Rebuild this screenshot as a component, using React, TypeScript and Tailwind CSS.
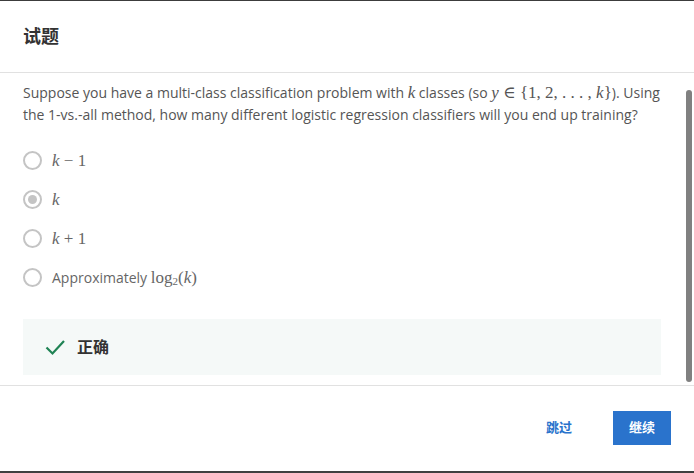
import React from "react";

const sans = "font-['Open_Sans','Noto_Sans_CJK_SC',sans-serif]";
const math = "font-['Liberation_Serif','DejaVu_Serif',serif] text-[17px] leading-none";

const options: React.ReactNode[] = [
  <span className={math}>
    <i>k</i> − 1
  </span>,
  <span className={math}>
    <i>k</i>
  </span>,
  <span className={math}>
    <i>k</i> + 1
  </span>,
  <span>
    Approximately{" "}
    <span className={math}>
      log<sub className="text-[11px]">2</sub>(<i>k</i>)
    </span>
  </span>,
];

const Radio = ({ checked }: { checked: boolean }) => (
  <span className="flex h-[19px] w-[19px] items-center justify-center rounded-full border-2 border-[#c4c4c4]">
    {checked && <span className="h-[9px] w-[9px] rounded-full bg-[#c4c4c4]" />}
  </span>
);

export default function App() {
  return (
    <div className={"flex h-[473px] w-[694px] flex-col bg-white border-t border-[#3c3c3c] border-b-2 border-b-[#404040] " + sans}>
      <div className="flex h-[72px] shrink-0 items-center border-b border-[#e1e1e1] px-[23px]">
        <h2 className="text-[18px] font-bold text-[#333]">试题</h2>
      </div>

      <div className="relative h-[313px] shrink-0 border-b border-[#e1e1e1]">
        <div className="px-[23px] pt-[9px] text-[14px] leading-[22px] text-[#555]">
          <p className="max-w-[642px]">
            Suppose you have a multi-class classification problem with <i className={math}>k</i> classes (so{" "}
            <span className={math}>
              <i>y</i> ∈ {"{"}1, 2, . . . , <i>k</i>{"}"}
            </span>
            ). Using the 1-vs.-all method, how many different logistic regression classifiers will you end up training?
          </p>

          <div className="mt-[25px] flex flex-col gap-[20px]">
            {options.map((o, i) => (
              <label key={i} className="flex h-[19px] items-center gap-[10px] text-[14px] text-[#666]">
                <Radio checked={i === 1} />
                {o}
              </label>
            ))}
          </div>

          <div className="mt-[32px] flex h-[56px] w-[638px] items-center gap-[12px] bg-[#f5f9f8] pl-[22px]">
            <svg width="20" height="20" viewBox="0 0 20 20" fill="none">
              <path d="M1.5 10.5 L7.5 16.5 L19 4" stroke="#1f8354" strokeWidth="2.2" />
            </svg>
            <span className="text-[16px] font-bold text-[#333]">正确</span>
          </div>
        </div>
        <div className="absolute right-[2px] top-[17px] h-[292px] w-[6px] rounded-full bg-[#808080]" />
      </div>

      <div className="flex flex-1 items-center justify-end gap-[41px] pr-[23px] pb-[2px]">
        <button className="text-[13px] font-bold text-[#2a73cc]">跳过</button>
        <button className="h-[34px] w-[58px] bg-[#2a73cc] text-[13px] font-bold text-white">继续</button>
      </div>
    </div>
  );
}
